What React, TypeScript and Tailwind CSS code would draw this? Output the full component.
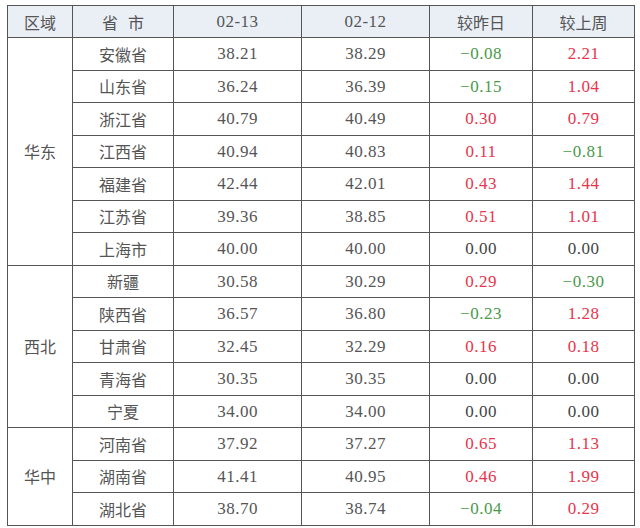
const groups = [
  {
    region: "华东",
    rows: [
      ["安徽省", "38.21", "38.29", "-0.08", "2.21"],
      ["山东省", "36.24", "36.39", "-0.15", "1.04"],
      ["浙江省", "40.79", "40.49", "0.30", "0.79"],
      ["江西省", "40.94", "40.83", "0.11", "-0.81"],
      ["福建省", "42.44", "42.01", "0.43", "1.44"],
      ["江苏省", "39.36", "38.85", "0.51", "1.01"],
      ["上海市", "40.00", "40.00", "0.00", "0.00"],
    ],
  },
  {
    region: "西北",
    rows: [
      ["新疆", "30.58", "30.29", "0.29", "-0.30"],
      ["陕西省", "36.57", "36.80", "-0.23", "1.28"],
      ["甘肃省", "32.45", "32.29", "0.16", "0.18"],
      ["青海省", "30.35", "30.35", "0.00", "0.00"],
      ["宁夏", "34.00", "34.00", "0.00", "0.00"],
    ],
  },
  {
    region: "华中",
    rows: [
      ["河南省", "37.92", "37.27", "0.65", "1.13"],
      ["湖南省", "41.41", "40.95", "0.46", "1.99"],
      ["湖北省", "38.70", "38.74", "-0.04", "0.29"],
    ],
  },
];

const cjk = "font-['Noto_Sans_CJK_SC',sans-serif] text-[16px]";
const num = "font-['Liberation_Serif',serif] text-[17px] tracking-[0.5px]";

function changeColor(v: string) {
  const n = parseFloat(v);
  if (n > 0) return "text-[#e8344c]";
  if (n < 0) return "text-[#4a9a4a]";
  return "text-[#444]";
}

// wide minus like the source's font
const fmt = (v: string) => v.replace("-", "\u2212");

export default function App() {
  return (
    <div className="h-[528px] w-[640px] overflow-hidden bg-white pl-[7px] pt-[5px] text-[#555]">
      <table className="w-[627px] table-fixed border-collapse">
        <colgroup>
          <col className="w-[65px]" />
          <col className="w-[101px]" />
          <col className="w-[128px]" />
          <col className="w-[128px]" />
          <col className="w-[103px]" />
          <col className="w-[102px]" />
        </colgroup>
        <thead>
          <tr className="h-[32px] bg-[#e9eff5]">
            <th className={`border border-[#555] font-normal ${cjk}`}>区域</th>
            <th className={`border border-[#555] font-normal ${cjk}`}>
              <span className="inline-flex gap-[10px]">
                <span>省</span>
                <span>市</span>
              </span>
            </th>
            <th className={`border border-[#555] font-normal ${num}`}>02-13</th>
            <th className={`border border-[#555] font-normal ${num}`}>02-12</th>
            <th className={`border border-[#555] font-normal ${cjk}`}>较昨日</th>
            <th className={`border border-[#555] font-normal ${cjk}`}>较上周</th>
          </tr>
        </thead>
        <tbody>
          {groups.map((g) =>
            g.rows.map((r, i) => (
              <tr className="h-[32.5px] text-center" key={r[0]}>
                {i === 0 && (
                  <td className={`border border-[#555] ${cjk}`} rowSpan={g.rows.length}>
                    {g.region}
                  </td>
                )}
                <td className={`border border-[#555] ${cjk}`}>{r[0]}</td>
                <td className={`border border-[#555] ${num}`}>{r[1]}</td>
                <td className={`border border-[#555] ${num}`}>{r[2]}</td>
                <td className={`border border-[#555] ${num} ${changeColor(r[3])}`}>{fmt(r[3])}</td>
                <td className={`border border-[#555] ${num} ${changeColor(r[4])}`}>{fmt(r[4])}</td>
              </tr>
            ))
          )}
        </tbody>
      </table>
    </div>
  );
}
